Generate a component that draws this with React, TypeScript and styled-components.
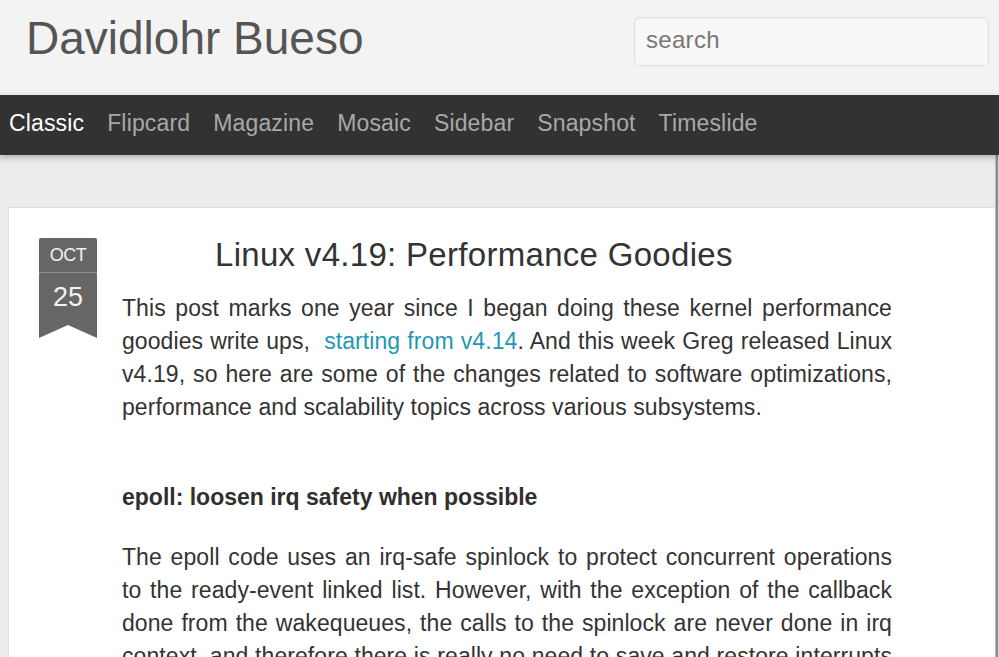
import styled, { createGlobalStyle } from "styled-components";

const GlobalStyle = createGlobalStyle`
  html, body {
    margin: 0;
    padding: 0;
    background: #ececec;
    font-family: "Liberation Sans", Arial, Helvetica, sans-serif;
    overflow: hidden;
  }
`;

const Page = styled.div`
  width: 999px;
  height: 657px;
  display: flex;
  flex-direction: column;
  overflow: hidden;
`;

const Header = styled.header`
  height: 95px;
  background: #f3f3f3;
  display: flex;
  justify-content: space-between;
  align-items: flex-start;
  padding: 0 10px 0 26px;
  box-sizing: border-box;
`;

const BlogTitle = styled.h1`
  margin: 11px 0 0;
  font-size: 46px;
  font-weight: 400;
  color: #555;
  line-height: normal;
`;

const SearchBox = styled.input`
  margin-top: 17px;
  width: 355px;
  height: 49px;
  box-sizing: border-box;
  border: 1px solid #e0e0e0;
  border-radius: 5px;
  background: #f8f8f8;
  box-shadow: inset 0 1px 2px rgba(0, 0, 0, 0.06);
  padding: 0 11px 3px;
  font-family: inherit;
  font-size: 24px;
  letter-spacing: 0.3px;
  color: #777;
  outline: none;
  &::placeholder {
    color: #777;
  }
`;

const NavBar = styled.nav`
  height: 60px;
  background: #323232;
  display: flex;
  align-items: center;
  gap: 23px;
  padding: 0 0 4px 9px;
  box-sizing: border-box;
  box-shadow: 0 2px 6px rgba(0, 0, 0, 0.25);
  position: relative;
  z-index: 2;
`;

const NavLink = styled.a<{ $active?: boolean }>`
  font-size: 23px;
  letter-spacing: 0.15px;
  color: ${(p) => (p.$active ? "#ffffff" : "#a8a8a8")};
  text-decoration: none;
`;

const Main = styled.div`
  flex: 1;
  display: flex;
  min-height: 0;
`;

const Canvas = styled.div`
  flex: 1;
  padding: 52px 0 0 8px;
  background: linear-gradient(#e4e4e4 0, #ececec 14px, #ececec 100%);
  min-width: 0;
`;

const ScrollTrack = styled.div`
  width: 4px;
  background: #d8d8d8;
  border-left: 1px solid #bbb;
  box-sizing: border-box;
  display: flex;
`;

const ScrollThumb = styled.div`
  flex: 1;
  margin: 0 1px 0 0;
  background: #8c8c8c;
`;

const Card = styled.article`
  background: #fff;
  border-top: 1px solid #dcdcdc;
  border-left: 1px solid #e2e2e2;
  height: 100%;
  box-sizing: border-box;
  display: flex;
  gap: 25px;
  padding: 30px 0 0 30px;
`;

const DateBadge = styled.div`
  flex: none;
  width: 58px;
  height: 100px;
  background: #666;
  color: #f2f2f2;
  display: flex;
  flex-direction: column;
  align-items: center;
  clip-path: polygon(0 0, 100% 0, 100% 100%, 50% 87%, 0 100%);
  border-radius: 2px 2px 0 0;
`;

const Month = styled.span`
  height: 34px;
  width: 100%;
  display: flex;
  align-items: center;
  justify-content: center;
  font-size: 18px;
  letter-spacing: -0.5px;
  border-bottom: 1px solid #8e8e8e;
`;

const Day = styled.span`
  font-size: 27px;
  margin-top: 9px;
`;

const Post = styled.div`
  width: 770px;
  color: #333;
`;

const PostTitle = styled.h2`
  margin: -3px 0 0;
  padding-left: 93px;
  font-size: 33px;
  font-weight: 400;
  letter-spacing: 0.3px;
  line-height: 40px;
  color: #333;
`;

const Paragraph = styled.p`
  margin: 17px 0 0;
  font-size: 23px;
  line-height: 33px;
  letter-spacing: 0.075px;
  text-align: justify;
`;

const SectionHeading = styled.h3`
  margin: 57px 0 0;
  font-size: 23px;
  font-weight: 700;
  line-height: 33px;
  color: #2f2f2f;
`;

const BodyText = styled(Paragraph)`
  margin-top: 27px;
`;

const TextLink = styled.a`
  color: #2199b2;
  text-decoration: none;
`;

const navItems = ["Classic", "Flipcard", "Magazine", "Mosaic", "Sidebar", "Snapshot", "Timeslide"];

export default function App() {
  return (
    <Page>
      <GlobalStyle />
      <Header>
        <BlogTitle>Davidlohr Bueso</BlogTitle>
        <SearchBox placeholder="search" />
      </Header>
      <NavBar>
        {navItems.map((n, i) => (
          <NavLink key={n} href="#" $active={i === 0}>
            {n}
          </NavLink>
        ))}
      </NavBar>
      <Main>
        <Canvas>
          <Card>
            <DateBadge>
              <Month>OCT</Month>
              <Day>25</Day>
            </DateBadge>
            <Post>
              <PostTitle>Linux v4.19: Performance Goodies</PostTitle>
              <Paragraph>
                This post marks one year since I began doing these kernel performance goodies write ups,{"\u00a0 "}
                <TextLink href="#">starting from v4.14</TextLink>. And this week Greg released Linux v4.19, so here
                are some of the changes related to software optimizations, performance and scalability topics across
                various subsystems.
              </Paragraph>
              <SectionHeading>epoll: loosen irq safety when possible</SectionHeading>
              <BodyText>
                The epoll code uses an irq-safe spinlock to protect concurrent operations to the ready-event linked
                list. However, with the exception of the callback done from the wakequeues, the calls to the spinlock
                are never done in irq context, and therefore there is really no need to save and restore interrupts
                every time.
              </BodyText>
            </Post>
          </Card>
        </Canvas>
        <ScrollTrack>
          <ScrollThumb />
        </ScrollTrack>
      </Main>
    </Page>
  );
}
